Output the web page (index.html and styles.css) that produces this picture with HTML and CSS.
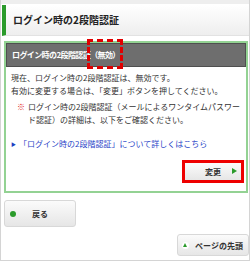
FILE: index.html
```html
<!DOCTYPE html>
<html lang="ja">
<head>
<meta charset="UTF-8">
<meta name="viewport" content="width=device-width, initial-scale=1.0">
<title>ログイン時の2段階認証</title>
<link rel="stylesheet" href="styles.css">
</head>
<body>
<div class="page">
    <div class="topline"></div>
    <h1 class="page-title">ログイン時の2段階認証</h1>

    <div class="panel">
        <div class="panel-head">
            ログイン時の2段階認証<span class="status">（無効）</span>
        </div>
        <div class="panel-body">
            <p class="lead">現在、ログイン時の2段階認証は、無効です。<br>有効に変更する場合は、「変更」ボタンを押してください。</p>
            <p class="note"><span class="mark">※</span><span>ログイン時の2段階認証（メールによるワンタイムパスワード認証）の詳細は、以下をご確認ください。</span></p>
            <a class="more" href="#">「ログイン時の2段階認証」について詳しくはこちら</a>
            <div class="actions">
                <div class="highlight">
                    <button type="button" class="btn btn-change">変更<span class="arrow-right"></span></button>
                </div>
            </div>
        </div>
    </div>

    <div class="nav">
        <button type="button" class="btn btn-back"><span class="icon-back"></span>戻る</button>
    </div>
    <div class="nav nav-right">
        <button type="button" class="btn btn-top"><span class="icon-top"></span>ページの先頭</button>
    </div>
</div>
</body>
</html>
```

FILE: styles.css
```css
body {
    margin: 0;
    padding: 0;
    background: #fff;
    font-family: "Noto Sans CJK JP", "Noto Sans", sans-serif;
    color: #333;
}
.page {
    width: 248px;
    height: 260px;
    border: 1px solid #d4d4d4;
    border-top: none;
    position: relative;
}
.topline {
    height: 4px;
    background: #eeeeee;
}
.page-title {
    margin: 1px 0 0 1px;
    height: 30px;
    border-left: 4px solid #2b9b2b;
    border-bottom: 1px solid #e2e2e2;
    background: linear-gradient(#ffffff, #eeeeee);
    font-size: 10px;
    font-weight: bold;
    line-height: 30px;
    padding-left: 7px;
    color: #222;
}
.panel {
    margin: 5px 1px 0 3px;
    border: 2px solid #93d293;
    height: 148px;
}
.panel-head {
    height: 22px;
    background: #6e6e6e;
    border: 1px solid #4f4f4f;
    color: #fff;
    font-size: 8px;
    font-weight: bold;
    line-height: 22px;
    letter-spacing: -0.6px;
    padding-left: 5px;
    position: relative;
}
.status {
    position: relative;
}
.status::after {
    content: "";
    position: absolute;
    left: -3px;
    right: -3px;
    top: -10px;
    bottom: -9px;
    border: 3px dashed #e00000;
}
.panel-body {
    padding: 4px 5px 0 5px;
    font-size: 8px;
    line-height: 13px;
}
.lead {
    margin: 0;
}
.note {
    margin: 3px 0 0 0;
    display: flex;
    gap: 3px;
    padding-left: 6px;
}
.mark {
    color: #e02020;
}
.more {
    display: block;
    margin-top: 11px;
    color: #2a45c8;
    text-decoration: none;
}
.more::before {
    content: "\25B6";
    font-size: 5px;
    color: #1d3fc2;
    margin-right: 3px;
    vertical-align: 1px;
}
.actions {
    display: flex;
    justify-content: flex-end;
    margin-top: 10px;
    margin-right: -3px;
}
.highlight {
    border: 3px solid #ee0000;
}
.btn {
    font-family: inherit;
    font-weight: bold;
    font-size: 8px;
    color: #333;
    border: 1px solid #d8d8d8;
    border-radius: 3px;
    background: linear-gradient(#fbfbfb, #e6e6e6);
    cursor: pointer;
    position: relative;
    padding: 0;
}
.btn-change {
    width: 56px;
    height: 17px;
    border-radius: 0;
    border: none;
    display: block;
}
.arrow-right {
    position: absolute;
    right: 4px;
    top: 5px;
    width: 0;
    height: 0;
    border-left: 5px solid #2b9b2b;
    border-top: 3px solid transparent;
    border-bottom: 3px solid transparent;
}
.nav {
    display: flex;
    margin-top: 7px;
    padding-left: 3px;
}
.nav-right {
    justify-content: flex-end;
    margin-top: 7px;
}
.btn-back {
    width: 72px;
    height: 27px;
    text-align: center;
}
.icon-back {
    position: absolute;
    left: 5px;
    top: 10px;
    width: 6px;
    height: 6px;
    border-radius: 50%;
    background: #2b9b2b;
}
.btn-top {
    width: 72px;
    height: 22px;
    padding-left: 12px;
}
.icon-top {
    position: absolute;
    left: 4px;
    top: 7px;
    width: 7px;
    height: 7px;
    border-radius: 50%;
    background: #fff;
}
.icon-top::after {
    content: "";
    position: absolute;
    left: 1px;
    top: 1px;
    border-bottom: 4px solid #2b9b2b;
    border-left: 2.5px solid transparent;
    border-right: 2.5px solid transparent;
}
```
